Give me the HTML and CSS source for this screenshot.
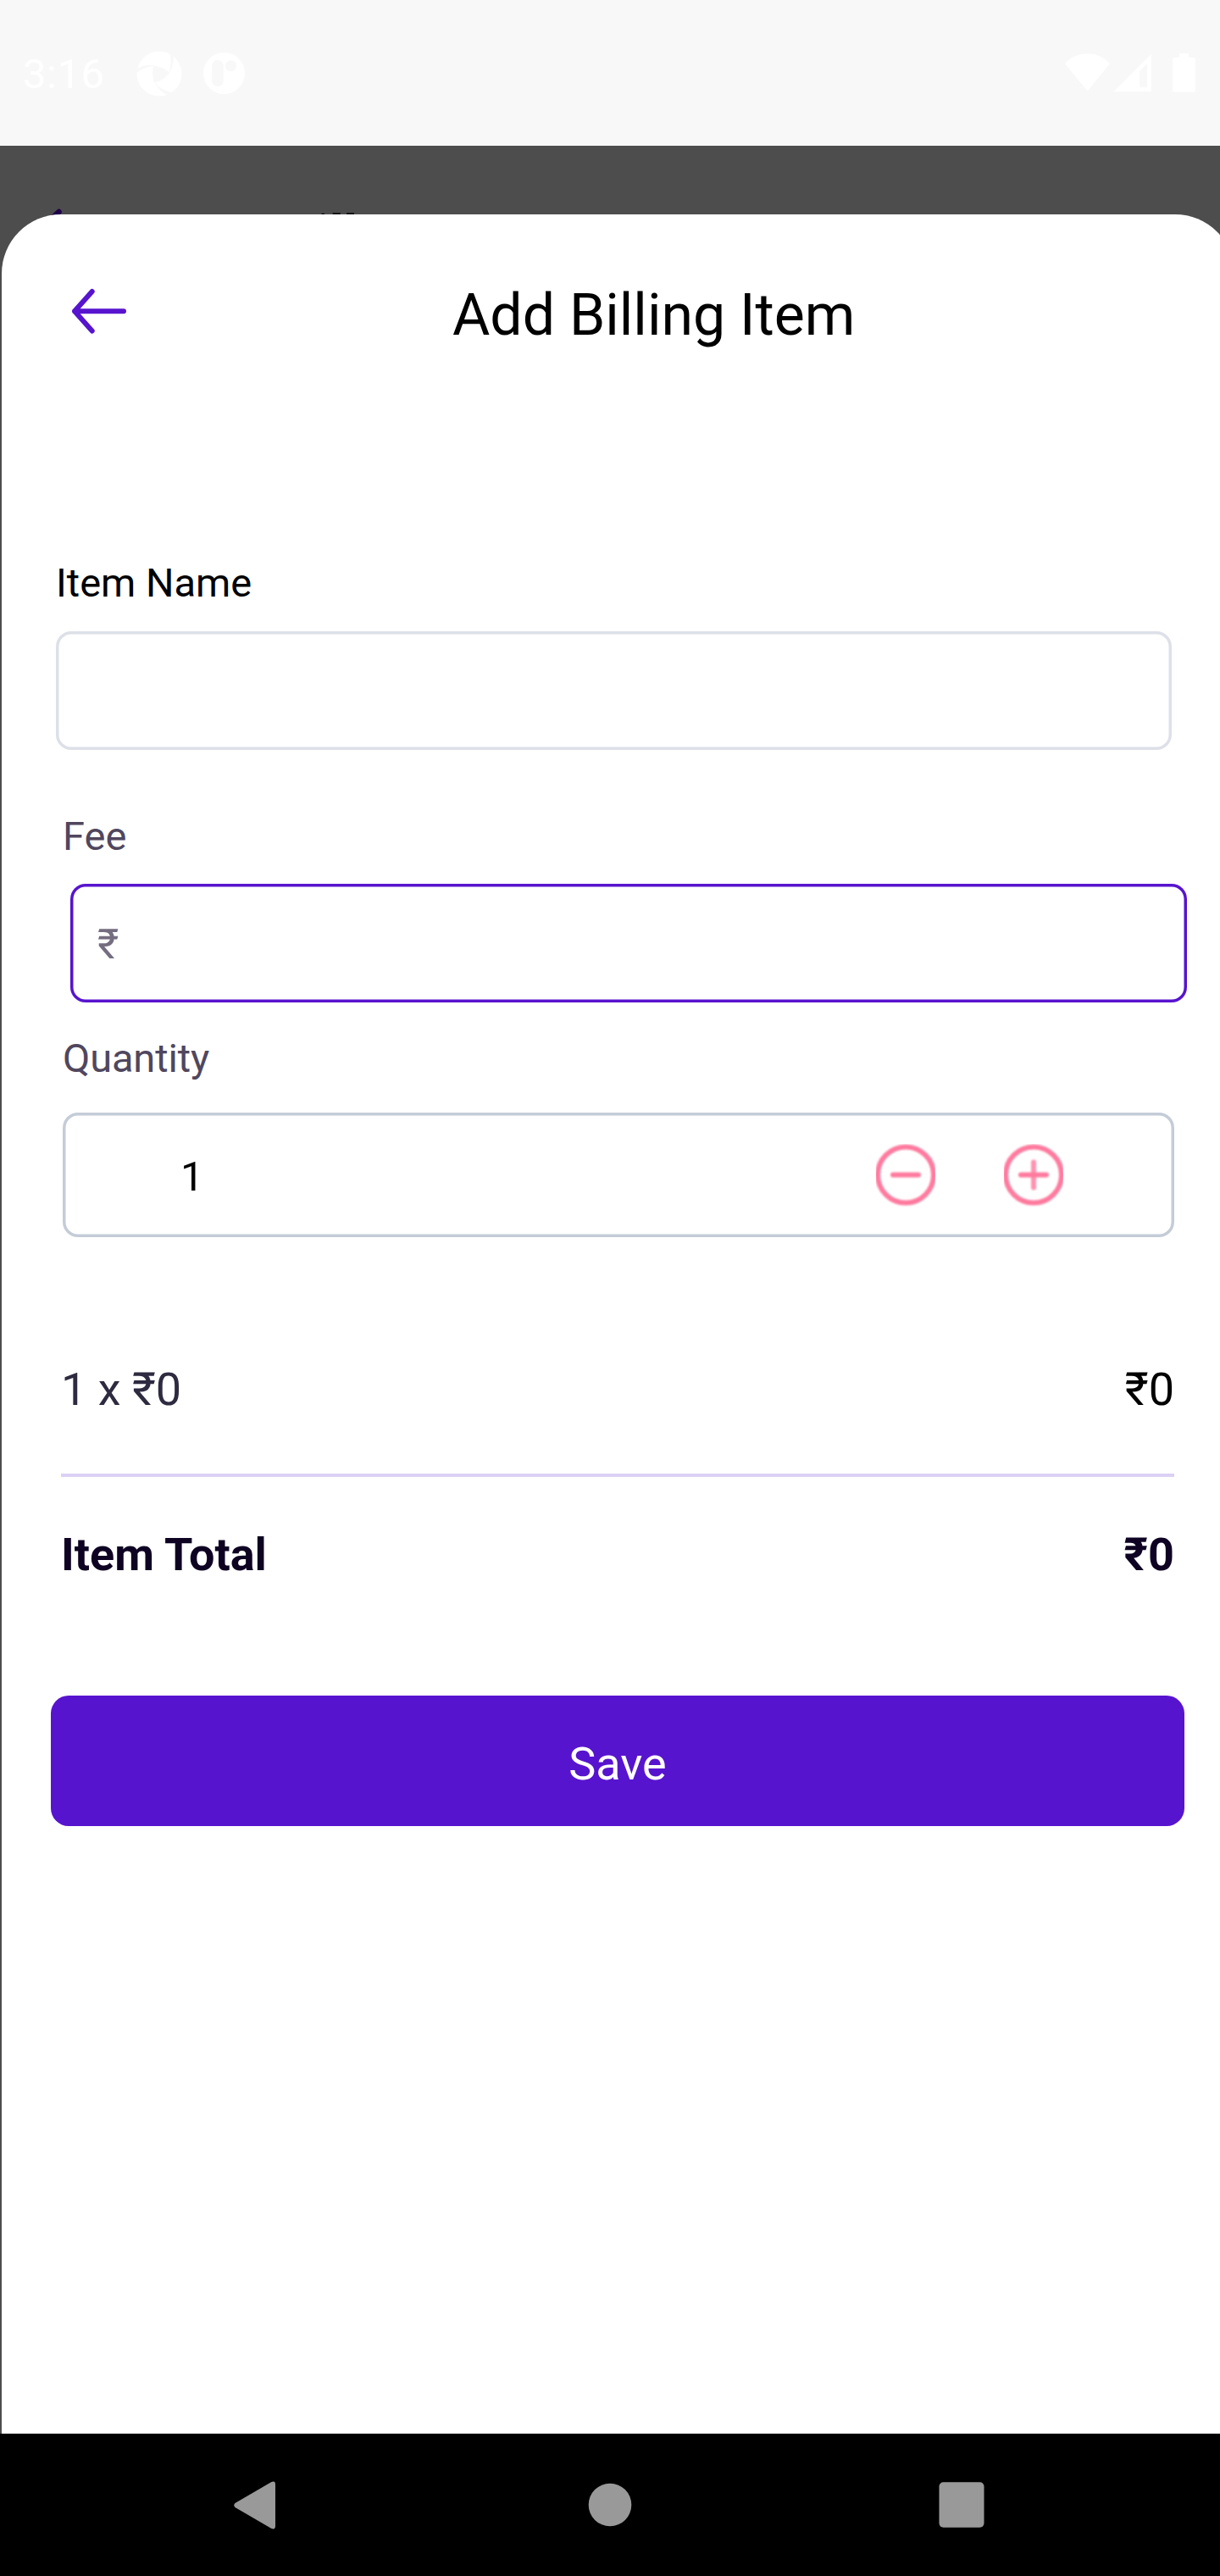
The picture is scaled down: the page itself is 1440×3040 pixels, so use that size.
FILE: index.html
```html
<!DOCTYPE html>
<html lang="en">
<head>
<meta charset="utf-8">
<title>Add Billing Item</title>
<link rel="stylesheet" href="styles.css">
</head>
<body>
<div class="screen">
  <header class="status">
    <span class="clock">3:16</span>
    <svg class="app-aperture" width="54" height="54" viewBox="0 0 54 54">
      <circle cx="27" cy="27" r="26.500" fill="#fff"/>
      <g fill="#f8f8f8">
        <path d="M20 18Q31 18 39 26Q32 36 21 37Q18 28 20 18Z"/>
        <path d="M0 22Q8 15.500 22 17L20 18Q8 19.500 0 26Z"/>
        <path d="M40 3L43.500 5Q45 17 38 27L38 25Q42 17 40 3Z"/>
        <path d="M21 36Q27 46 42 49L36 52Q26 47 21 36Z"/>
      </g>
    </svg>
    <svg class="app-r" width="49" height="49" viewBox="0 0 49 49">
      <circle cx="24.500" cy="24.500" r="24.500" fill="#fff"/>
      <rect x="10" y="8.700" width="13.700" height="31.300" rx="6.850" fill="#f8f8f8"/>
      <circle cx="32.500" cy="15.700" r="6.600" fill="#f8f8f8"/>
    </svg>
    <svg class="system" width="156" height="46" viewBox="0 0 156 46">
      <g fill="#fff">
        <path d="M0 12Q11 .3 26.500 .3T53 12L26.500 44.500Z"/>
        <path fill-rule="evenodd" d="M57.500 45L102 .5V45ZM88 21V40H97V12Z"/>
        <path d="M135 .3h11v4.400h5.500q2.500 0 2.500 2.500V43q0 2.500-2.500 2.500h-22q-2.500 0-2.500-2.500V7.200q0-2.500 2.500-2.500h5.500Z"/>
      </g>
    </svg>
  </header>

  <main class="backdrop">
    <svg class="behind" width="1440" height="82" viewBox="0 0 1440 82">
      <path d="M52 95L69.500 78" stroke="#1e0048" stroke-width="6.500" stroke-linecap="round"/>
      <path d="M378.500 82q.5-2.500 2.700-2.500t2.700 2.500ZM392.700 79.300h9v2.700h-9ZM409 79.300h9v2.700h-9Z" fill="#08060f"/>
    </svg>
    <section class="sheet">
      <div class="titlebar">
        <svg class="back" width="68" height="56" viewBox="0 0 68 56" fill="none" stroke="#5714ce" stroke-width="6" stroke-linecap="round" stroke-linejoin="round">
          <path d="M26.700 5L6 28.300L26.700 51.500M6 28.300H64"/>
        </svg>
        <h1 class="title">Add Billing Item</h1>
      </div>

      <label class="label label-name">Item Name</label>
      <div class="field field-name"></div>

      <label class="label label-fee">Fee</label>
      <div class="field field-fee">₹</div>

      <label class="label label-qty">Quantity</label>
      <div class="field field-qty">
        <span class="qty">1</span>
        <svg class="step" width="70" height="74" viewBox="0 0 70 74">
          <g class="step-art">
            <circle cx="35" cy="36.500" r="33"/>
            <path d="M20 36.500H50"/>
          </g>
        </svg>
        <svg class="step" width="70" height="74" viewBox="0 0 70 74">
          <g class="step-art">
            <circle cx="35" cy="36.500" r="33"/>
            <path class="faint" d="M35 21.500V51.500"/>
            <path d="M20 36.500H50"/>
          </g>
        </svg>
      </div>

      <div class="row row-line"><span>1 x ₹0</span><span class="amount">₹0</span></div>
      <div class="divider"></div>
      <div class="row row-total"><span>Item Total</span><span>₹0</span></div>

      <button class="save" type="button">Save</button>
    </section>
  </main>

  <nav class="navbar">
    <svg width="50" height="57" viewBox="0 0 50 57"><path d="M1.500 26L44 1.200Q49 -1 49 4V53Q49 58 44 55.800L1.500 31Q-1 28.500 1.500 26Z" fill="#999"/></svg>
    <svg class="home" width="52" height="52" viewBox="0 0 52 52"><circle cx="26" cy="26" r="25.300" fill="#999"/></svg>
    <svg width="54" height="54" viewBox="0 0 54 54"><rect x=".5" y=".3" width="53" height="53.400" rx="5" fill="#999"/></svg>
  </nav>
</div>
</body>
</html>
```

FILE: styles.css
```css
* { box-sizing: border-box; }

body {
  margin: 0;
  font-family: Roboto, "Liberation Sans", sans-serif;
  color: #000;
}

.screen {
  width: 1440px;
  height: 3040px;
  display: flex;
  flex-direction: column;
  overflow: hidden;
}

/* Android status bar */
.status {
  height: 172px;
  flex: none;
  display: flex;
  align-items: flex-start;
  padding: 59px 27px 0 27px;
  background: #f8f8f8;
  color: #fff;
}
.clock { width: 134px; font-size: 49px; line-height: 58px; letter-spacing: .5px; }
.app-aperture { margin-top: 1px; }
.app-r { margin: 3px 0 0 25px; }
.system { margin: 4px 0 0 auto; }

/* Dimmed page with the sheet over it */
.backdrop {
  position: relative;
  flex: 1;
  padding: 81px 0 0 2px;
  background: #4d4d4d;
}
.behind { position: absolute; left: 0; top: 0; }

.sheet {
  position: relative;
  width: 1455px;
  height: 2619px;
  display: flex;
  flex-direction: column;
  align-items: flex-start;
  border-radius: 70px 70px 0 0;
  background: #fff;
}

.titlebar {
  display: flex;
  align-items: flex-start;
  padding: 79px 0 0 80px;
  height: 407px;
}
.back { margin-top: 7px; }
.title {
  margin: 0 0 0 384px;
  font-size: 68px;
  line-height: 80px;
  font-weight: 400;
}

.label { font-size: 47px; line-height: 56px; color: #50475e; }
.label-name { margin-left: 64px; color: #000; }
.label-fee { margin: 74px 0 0 72px; }
.label-qty { margin: 38px 0 0 72px; letter-spacing: -.15px; }

.field {
  display: flex;
  align-items: center;
  height: 140px;
  border-radius: 18px;
  font-size: 49px;
}
.field-name {
  width: 1317px;
  margin: 29px 0 0 64px;
  box-shadow: inset 0 0 0 3.5px #dde0e8;
}
.field-fee {
  width: 1318px;
  margin: 28px 0 0 81px;
  padding: 3px 0 0 32px;
  box-shadow: inset 0 0 0 3.5px #5714ce;
  color: #756d80;
}
.field-qty {
  width: 1312px;
  height: 147px;
  margin: 36px 0 0 72px;
  padding-left: 139px;
  box-shadow: inset 0 0 0 3.5px #c4ccd7;
}
.qty { width: 821px; padding-top: 4px; }
.step + .step { margin-left: 81px; }
.step-art {
  fill: none;
  stroke: #ff7a9e;
  stroke-width: 6px;
  stroke-linecap: round;
  filter: blur(.9px);
}
.faint { stroke: #ff93b1; }

.row {
  display: flex;
  justify-content: space-between;
  width: 1314px;
  height: 64px;
  margin-left: 70px;
  font-size: 54px;
  line-height: 65px;
}
.row-line { margin-top: 147px; color: #2e2a40; }
.amount { color: #000; }
.divider {
  width: 1314px;
  height: 4px;
  margin: 68px 0 59px 70px;
  background: #dcd0f5;
}
.row-total { font-weight: 700; color: #0e0322; }

.save {
  width: 1338px;
  height: 154px;
  margin: 135px 0 0 58px;
  padding: 7px 0 0;
  border: 0;
  border-radius: 21px;
  background: #5714ce;
  color: #fff;
  font: 400 54px/64px Roboto, "Liberation Sans", sans-serif;
}

/* Android navigation bar */
.navbar {
  height: 168px;
  flex: none;
  display: flex;
  align-items: center;
  justify-content: space-between;
  padding: 0 278px 0 276px;
  background: #000;
}
.home { margin-left: 6px; }
```
